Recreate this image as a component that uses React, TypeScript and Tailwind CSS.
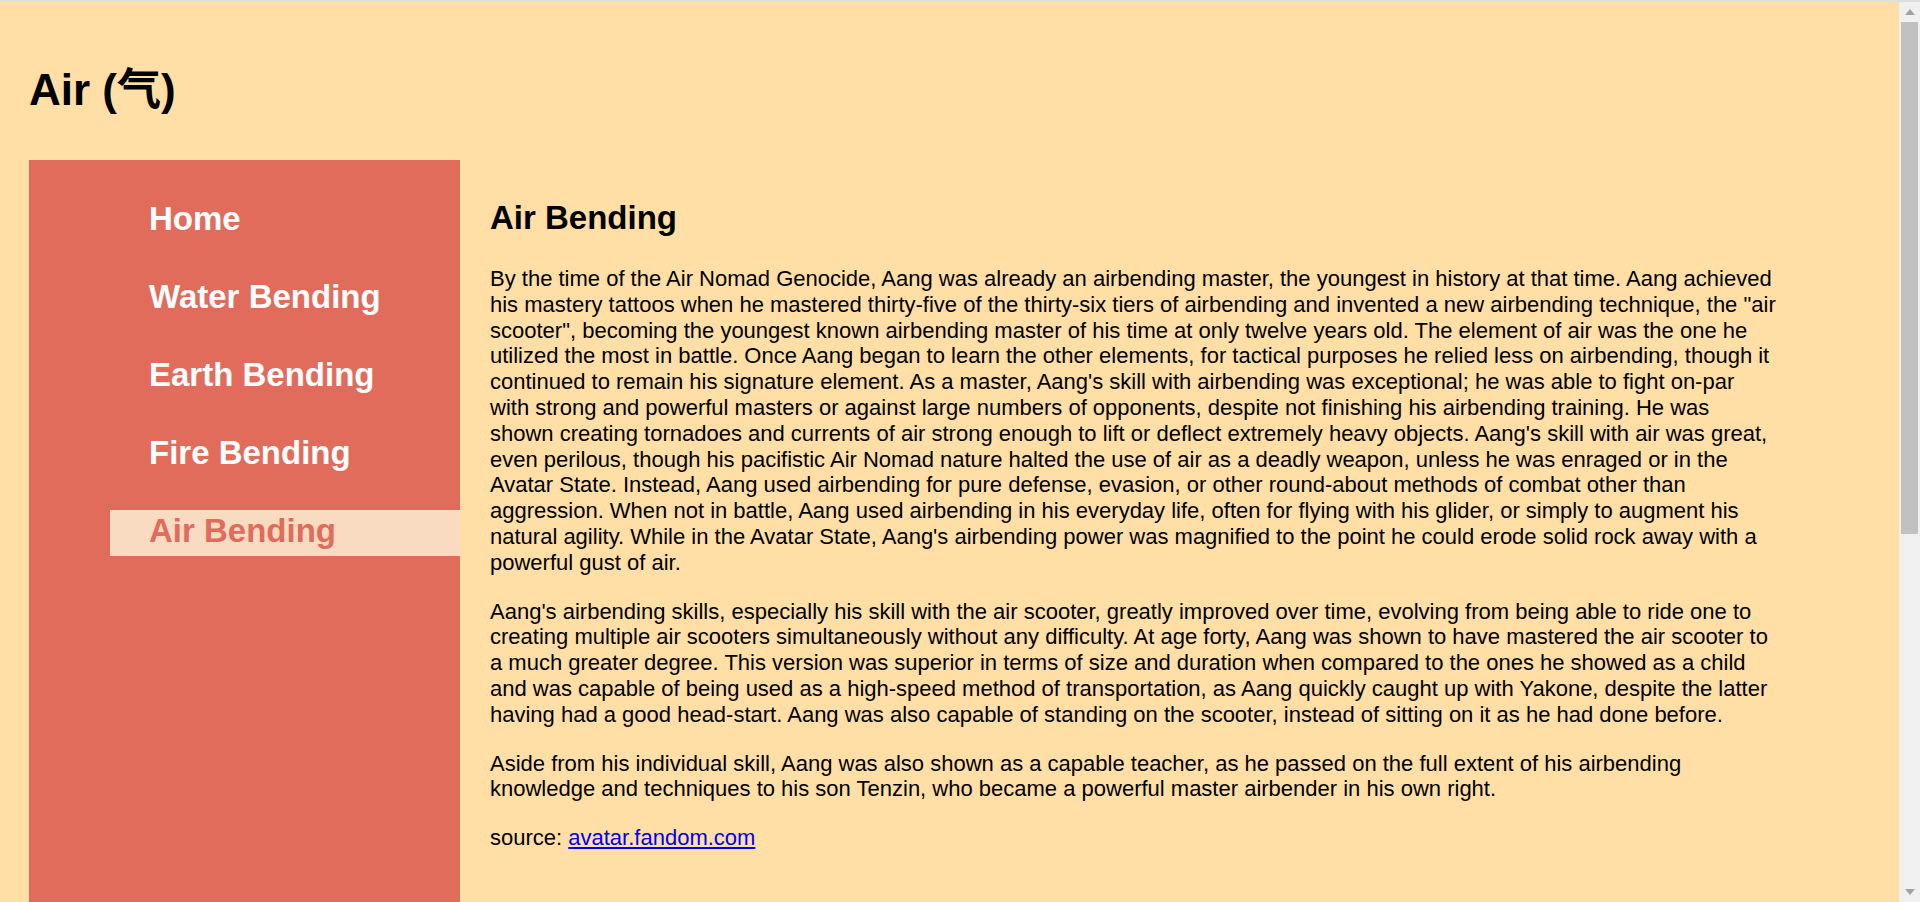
const navItems = ["Home", "Water Bending", "Earth Bending", "Fire Bending", "Air Bending"];

function Scrollbar() {
  return (
    <div className="w-[21px] shrink-0 flex flex-col items-center bg-[#f0f0f0]">
      <div className="h-[20px] flex items-center justify-center">
        <svg width="10" height="6" viewBox="0 0 10 6">
          <path d="M0 6 L5 0 L10 6 Z" fill="#a3a3a3" />
        </svg>
      </div>
      <div className="w-[17px] h-[512px] bg-[#c1c1c1]" />
      <div className="flex-1" />
      <div className="h-[20px] flex items-center justify-center">
        <svg width="10" height="6" viewBox="0 0 10 6">
          <path d="M0 0 L5 6 L10 0 Z" fill="#a3a3a3" />
        </svg>
      </div>
    </div>
  );
}

export default function App() {
  return (
    <div className="h-[902px] overflow-hidden flex flex-col bg-[#ffdfa5] text-black font-['Liberation_Sans',Arial,sans-serif]">
      <div className="h-[2px] shrink-0 bg-[#dedede]" />
      <div className="flex-1 min-h-0 flex">
        <div className="flex-1 min-w-0 overflow-hidden">
          <h1 className="mt-[62.5px] ml-[29px] text-[44px] font-bold leading-[1.15]">
            Air (<span className="leading-[0] font-['Noto_Sans_CJK_SC',sans-serif]">气</span>)
          </h1>

          <div className="mt-[45px] ml-[29px] flex">
            {/* Sidebar nav */}
            <nav className="w-[431px] shrink-0 min-h-[760px] bg-[#e16c5c] pt-[38px] pl-[81px]">
              <ul className="flex flex-col gap-[32px]">
                {navItems.map((item) => {
                  const active = item === "Air Bending";
                  return (
                    <li
                      key={item}
                      className={
                        active
                          ? "h-[46px] pt-[2px] pl-[39px] text-[33px] font-bold leading-[1.15] bg-[#f9dbc1] text-[#e16c5c]"
                          : "h-[46px] pt-[2px] pl-[39px] text-[33px] font-bold leading-[1.15] text-white"
                      }
                    >
                      {item}
                    </li>
                  );
                })}
              </ul>
            </nav>

            {/* Article */}
            <main className="ml-[30px] w-[1287px] text-[22px] leading-[25.8px]">
              <h2 className="mt-[39px] mb-[29px] text-[33px] font-bold leading-[1.15]">Air Bending</h2>
              <p className="mb-[23px]">
                By the time of the Air Nomad Genocide, Aang was already an airbending master, the youngest in history at that time. Aang achieved his mastery tattoos when he mastered thirty-five of the thirty-six tiers of airbending and invented a new airbending technique, the "air scooter", becoming the youngest known airbending master of his time at only twelve years old. The element of air was the one he utilized the most in battle. Once Aang began to learn the other elements, for tactical purposes he relied less on airbending, though it continued to remain his signature element. As a master, Aang's skill with airbending was exceptional; he was able to fight on-par with strong and powerful masters or against large numbers of opponents, despite not finishing his airbending training. He was shown creating tornadoes and currents of air strong enough to lift or deflect extremely heavy objects. Aang's skill with air was great, even perilous, though his pacifistic Air Nomad nature halted the use of air as a deadly weapon, unless he was enraged or in the Avatar State. Instead, Aang used airbending for pure defense, evasion, or other round-about methods of combat other than aggression. When not in battle, Aang used airbending in his everyday life, often for flying with his glider, or simply to augment his natural agility. While in the Avatar State, Aang's airbending power was magnified to the point he could erode solid rock away with a powerful gust of air.
              </p>
              <p className="mb-[23px]">
                Aang's airbending skills, especially his skill with the air scooter, greatly improved over time, evolving from being able to ride one to creating multiple air scooters simultaneously without any difficulty. At age forty, Aang was shown to have mastered the air scooter to a much greater degree. This version was superior in terms of size and duration when compared to the ones he showed as a child and was capable of being used as a high-speed method of transportation, as Aang quickly caught up with Yakone, despite the latter having had a good head-start. Aang was also capable of standing on the scooter, instead of sitting on it as he had done before.
              </p>
              <p className="mb-[23px]">
                Aside from his individual skill, Aang was also shown as a capable teacher, as he passed on the full extent of his airbending knowledge and techniques to his son Tenzin, who became a powerful master airbender in his own right.
              </p>
              <p>
                source:{" "}
                <a href="#" className="text-[#0000ee] underline">
                  avatar.fandom.com
                </a>
              </p>
            </main>
          </div>
        </div>
        <Scrollbar />
      </div>
    </div>
  );
}
